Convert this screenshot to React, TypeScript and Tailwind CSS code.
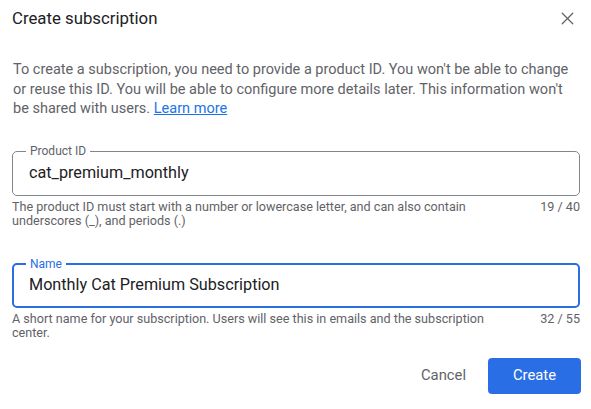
import { X } from "lucide-react";

function Field({
  label,
  value,
  helper,
  count,
  focused,
}: {
  label: string;
  value: string;
  helper: string;
  count: string;
  focused?: boolean;
}) {
  return (
    <div>
      <div
        className={`relative flex h-[45px] items-center rounded-[5px] ${
          focused ? "border-2 border-[#2a6ee6] pl-[15px]" : "border border-[#80868b] pl-4"
        }`}
      >
        <span
          className={`absolute -top-[8px] bg-white px-1 text-[12px] leading-[14px] ${
            focused ? "left-[12px] text-[#2a6ee6]" : "left-[13px] text-[#5f6368]"
          }`}
        >
          {label}
        </span>
        <span className="text-[16.2px] text-[#202124]">{value}</span>
      </div>
      <div className="mt-[4px] flex justify-between text-[12.6px] leading-[14.5px] text-[#5f6368]">
        <p className="max-w-[495px]">{helper}</p>
        <span>{count}</span>
      </div>
    </div>
  );
}

export default function App() {
  return (
    <div className="h-[409px] w-[591px] bg-white px-3 font-['Roboto',sans-serif]">
      <div className="flex items-center justify-between pt-[6px]">
        <h1 className="text-[16.8px] leading-6 text-[#202124]">Create subscription</h1>
        <X size={21} strokeWidth={1.5} className="mr-[1px] text-[#5f6368]" />
      </div>

      <p className="mt-[30px] pl-px text-[14.5px] leading-[19.5px] text-[#5f6368]">
        To create a subscription, you need to provide a product ID. You won't be able to change or
        reuse this ID. You will be able to configure more details later. This information won't be
        shared with users.{" "}
        <a href="#" className="text-[#1a73e8] underline">
          Learn more
        </a>
      </p>

      <div className="mt-[32px] mr-[-1px]">
        <Field
          label="Product ID"
          value="cat_premium_monthly"
          helper="The product ID must start with a number or lowercase letter, and can also contain underscores (_), and periods (.)"
          count="19 / 40"
        />
      </div>

      <div className="mt-[34px] mr-[-1px]">
        <Field
          label="Name"
          value="Monthly Cat Premium Subscription"
          helper="A short name for your subscription. Users will see this in emails and the subscription center."
          count="32 / 55"
          focused
        />
      </div>

      <div className="mt-[17px] mr-[-2px] flex items-center justify-end gap-[22px]">
        <button type="button" className="text-[14.8px] text-[#5f6368]">
          Cancel
        </button>
        <button
          type="button"
          className="h-9 w-[93px] rounded-[4px] bg-[#2a6ee6] text-[14.8px] text-white"
        >
          Create
        </button>
      </div>
    </div>
  );
}
